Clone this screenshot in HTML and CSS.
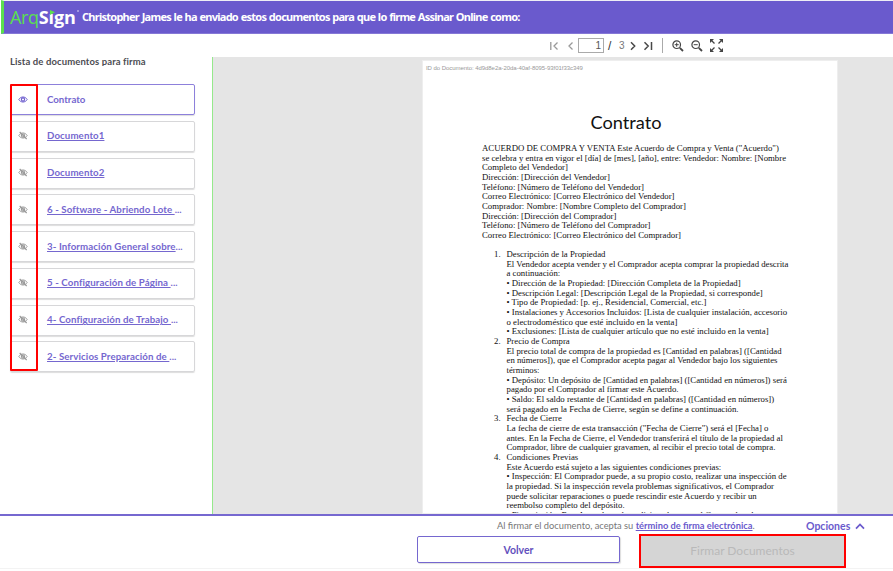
FILE: index.html
```html
<!DOCTYPE html>
<html lang="es">
<head>
<meta charset="utf-8">
<title>ArqSign</title>
<link rel="stylesheet" href="styles.css">
</head>
<body>
<svg width="0" height="0" class="defs">
  <symbol id="eye" viewBox="0 0 12 10"><path d="M1 5C3.2 1 8.8 1 11 5 8.8 9 3.2 9 1 5Z" fill="none" stroke="currentColor" stroke-width="1.2"/><circle cx="6" cy="5" r="1.9" fill="none" stroke="currentColor" stroke-width="1.4"/></symbol>
  <symbol id="off" viewBox="0 0 12 10"><path d="M1 5C3.2 1 8.8 1 11 5 8.8 9 3.2 9 1 5Z" fill="none" stroke="currentColor" stroke-width="1.2"/><circle cx="6" cy="5" r="1.9" fill="none" stroke="currentColor" stroke-width="1.3"/><path d="M2 .8 10.4 9.2" stroke="currentColor" stroke-width="1.3"/></symbol>
</svg>
<header class="top">
  <div class="logo"><span class="arq">Arq</span><b>S<span class="i">ı<svg viewBox="0 0 5 5"><path d="M0 0 5 2.2 0 5Z" fill="#5be04e"/></svg></span>gn</b><i class="reg"></i></div>
  <p class="sender">Christopher James le ha enviado estos documentos para que lo firme Assinar Online como:</p>
</header>
<main class="main">
  <aside class="side">
    <h2><span>Lista de documentos para firma</span></h2>
    <div class="list">
      <div class="doc active"><svg><use href="#eye"/></svg><span>Contrato</span></div>
      <div class="doc"><svg><use href="#off"/></svg><a>Documento1</a></div>
      <div class="doc"><svg><use href="#off"/></svg><a>Documento2</a></div>
      <div class="doc"><svg><use href="#off"/></svg><a class="d3">6 - Software - Abriendo Lote </a><span>...</span></div>
      <div class="doc"><svg><use href="#off"/></svg><a class="d4">3- Información General sobre</a><span>...</span></div>
      <div class="doc"><svg><use href="#off"/></svg><a class="d5">5 - Configuración de Página </a><span>...</span></div>
      <div class="doc"><svg><use href="#off"/></svg><a class="d6">4- Configuración de Trabajo </a><span>...</span></div>
      <div class="doc"><svg><use href="#off"/></svg><a class="d7">2- Servicios Preparación de </a><span>...</span></div>
      <div class="mark"></div>
    </div>
  </aside>
  <section class="viewer">
    <div class="tools">
      <svg class="nav" width="28" height="12" viewBox="0 0 28 12" fill="none" stroke="#999" stroke-width="1.3"><path d="M1.8 2v8M8.5 2.5 5 6l3.500 3.500M23.500 2.500 20 6l3.500 3.500"/></svg>
      <span class="num">1</span><span class="slash">/</span><span class="total">3</span>
      <svg class="next" width="26" height="12" viewBox="0 0 26 12" fill="none" stroke="#484848" stroke-width="1.500"><path d="M2 2.300 5.700 6 2 9.700M15.500 2.300 19.200 6l-3.700 3.700M22.500 2v8"/></svg>
      <i class="sep"></i>
      <svg class="zoom" width="12" height="12" viewBox="0 0 12 12" fill="none" stroke="#444"><circle cx="4.700" cy="4.700" r="3.800" stroke-width="1.200"/><path d="M7.800 7.800 11 11" stroke-width="1.800"/><path d="M2.700 4.700h4M4.700 2.700v4"/></svg>
      <svg class="zoom" width="12" height="12" viewBox="0 0 12 12" fill="none" stroke="#444"><circle cx="4.700" cy="4.700" r="3.800" stroke-width="1.200"/><path d="M7.800 7.800 11 11" stroke-width="1.800"/><path d="M2.700 4.700h4"/></svg>
      <svg width="13" height="13" viewBox="0 0 13 13" fill="#444" stroke="#444"><path stroke="none" d="M0 0h4L0 4ZM13 0v4L9 0ZM0 13V9l4 4ZM13 13H9l4-4Z"/><path stroke-width="1.300" d="m1 1 3.500 3.500M12 1 8.500 4.500M1 12l3.500-3.500M12 12 8.500 8.500"/></svg>
    </div>
    <div class="canvas">
      <article class="page">
        <p class="id">ID do Documento: 4d9d8e2a-20da-40af-8095-93f01f33c349</p>
        <h1>Contrato</h1>
        <div class="text">ACUERDO DE COMPRA Y VENTA Este Acuerdo de Compra y Venta ("Acuerdo")
se celebra y entra en vigor el [día] de [mes], [año], entre: Vendedor: Nombre: [Nombre
Completo del Vendedor]
Dirección: [Dirección del Vendedor]
Teléfono: [Número de Teléfono del Vendedor]
Correo Electrónico: [Correo Electrónico del Vendedor]
Comprador: Nombre: [Nombre Completo del Comprador]
Dirección: [Dirección del Comprador]
Teléfono: [Número de Teléfono del Comprador]
Correo Electrónico: [Correo Electrónico del Comprador]</div>
        <ol class="text">
<li>Descripción de la Propiedad
El Vendedor acepta vender y el Comprador acepta comprar la propiedad descrita
a continuación:
• Dirección de la Propiedad: [Dirección Completa de la Propiedad]
• Descripción Legal: [Descripción Legal de la Propiedad, si corresponde]
• Tipo de Propiedad: [p. ej., Residencial, Comercial, etc.]
• Instalaciones y Accesorios Incluidos: [Lista de cualquier instalación, accesorio
o electrodoméstico que esté incluido en la venta]
• Exclusiones: [Lista de cualquier artículo que no esté incluido en la venta]</li><li>Precio de Compra
El precio total de compra de la propiedad es [Cantidad en palabras] ([Cantidad
en números]), que el Comprador acepta pagar al Vendedor bajo los siguientes
términos:
• Depósito: Un depósito de [Cantidad en palabras] ([Cantidad en números]) será
pagado por el Comprador al firmar este Acuerdo.
• Saldo: El saldo restante de [Cantidad en palabras] ([Cantidad en números])
será pagado en la Fecha de Cierre, según se define a continuación.</li><li>Fecha de Cierre
La fecha de cierre de esta transacción ("Fecha de Cierre") será el [Fecha] o
antes. En la Fecha de Cierre, el Vendedor transferirá el título de la propiedad al
Comprador, libre de cualquier gravamen, al recibir el precio total de compra.</li><li>Condiciones Previas
Este Acuerdo está sujeto a las siguientes condiciones previas:
• Inspección: El Comprador puede, a su propio costo, realizar una inspección de
la propiedad. Si la inspección revela problemas significativos, el Comprador
puede solicitar reparaciones o puede rescindir este Acuerdo y recibir un
reembolso completo del depósito.
• Financiación: Este Acuerdo está condicionado a que el Comprador obtenga</li></ol>
      </article>
    </div>
  </section>
</main>
<footer class="foot">
  <div class="terms"><p>Al firmar el documento, acepta su <a>término de firma electrónica</a>.</p>
    <div class="opts"><span>Opciones</span><svg width="10" height="7" viewBox="0 0 10 7" fill="none" stroke="#6a5acd" stroke-width="1.700"><path d="M1 5.700 5 1.500 9 5.700"/></svg></div></div>
  <div class="actions"><button class="back">Volver</button><button class="sign">Firmar Documentos</button></div>
</footer>
</body>
</html>
```
FILE: styles.css
```css
* { box-sizing: border-box; }
body { margin: 0; width: 893px; height: 571px; overflow: hidden; background: #fff; font-family: Lato, sans-serif; display: flex; flex-direction: column; }
p, h1, h2 { margin: 0; white-space: nowrap; }
svg { flex: none; }
.defs { position: absolute; }
.top { height: 34px; flex: none; margin-left: 1px; background: #6a5acd; border-top: 1px solid #eeeef5; border-left: 3px solid #5be04e; border-bottom: 1px solid #8578d6; display: flex; align-items: center; color: #fff; }
.logo { width: 78px; padding-left: 6px; display: flex; align-items: baseline; font: 18px/30px "Open Sans", sans-serif; letter-spacing: -.35px; white-space: nowrap; }
.logo b { font-weight: 700; letter-spacing: -.1px; }
.arq { color: #5be04e; }
.i { position: relative; }
.i svg { position: absolute; width: 5px; height: 5px; left: 1px; top: 5px; }
.reg { width: 2px; height: 2px; border-radius: 50%; background: #b5ace6; align-self: flex-start; margin: 8px 0 0 1px; }
.sender { font: 700 11px/30px "Noto Sans", sans-serif; letter-spacing: -.74px; word-spacing: .5px; }
.main { height: 480px; flex: none; display: flex; }
.side { width: 212px; padding: 23px 0 0 10px; }
.side h2 { height: 9px; overflow: hidden; font: 700 9.500px/12px Lato, sans-serif; letter-spacing: .11px; color: #4c4c52; display: flex; align-items: flex-end; }
.side h2 span { margin-bottom: -2px; }
.list { position: relative; margin-top: 18px; display: grid; row-gap: 5.750px; width: 185px; }
.doc { height: 31px; border: 1px solid #d7d7d9; border-radius: 2px; box-shadow: 0 1px 1px #ddd; display: flex; align-items: center; font-size: 9.700px; font-weight: 700; color: #7567cf; white-space: pre; padding-bottom: 2px; }
.doc svg { width: 10px; height: 9px; margin: 1px 19px 0 7px; color: #999; }
.doc.active { border-color: #8d80db; }
.doc.active svg { color: #6a5acd; }
.doc a { text-decoration: underline; letter-spacing: .1px; }
.mark { position: absolute; left: 0; top: 0; width: 28px; height: 287px; border: 2px solid #f00; border-radius: 1px; }
.viewer { flex: 1; min-width: 0; }
.tools { height: 23px; display: flex; align-items: center; padding-left: 337px; color: #777; font: 10px/14px "Liberation Sans", sans-serif; }
.num { width: 26px; height: 15px; margin-left: 1px; padding-right: 2px; border: 1px solid #aaa; text-align: right; color: #555; }
.slash { margin-left: 4px; width: 7px; color: #333; font-size: 12px; }
.total { width: 6px; margin-left: 4px; }
.next { margin-left: 4px; }
.sep { width: 1px; height: 15px; background: #aaa; margin: 0 9px 0 7px; }
.zoom { margin-right: 7px; }
.canvas { height: 457px; background: #e5e5e5; border-left: 1.500px solid #95e98b; padding: 3px 0 0 209px; overflow: hidden; }
.page { width: 416px; height: 454px; background: #fff; border: 1px solid #eee; overflow: hidden; }
.id { font: 6px/8px "Liberation Sans", sans-serif; color: #999; padding: 3px 0 0 3px; letter-spacing: -.05px; }
.page h1 { font: 400 18.200px/22px Lato, sans-serif; color: #111; text-align: center; margin-top: 39px; padding-right: 8px; }
.text { font: 8.750px/9.670px "Liberation Serif", serif; white-space: pre; color: #111; margin: 11px 0 0 59px; }
ol.text { margin: 9.300px 0 0 71px; padding: 0; list-style: none; counter-reset: n; white-space: normal; }
ol.text li { counter-increment: n; white-space: pre; display: flex; }
ol.text li::before { content: counter(n) "."; width: 12.500px; flex: none; }
.foot { height: 57px; border-top: 2px solid #7668d0; background: #fff; }
.terms { height: 20px; display: flex; align-items: center; padding-left: 497px; font-size: 9.300px; line-height: 18px; color: #777; }
.terms p { width: 309px; }
.terms a { color: #6a5acd; font-weight: 700; text-decoration: underline; }
.opts { display: flex; align-items: center; gap: 5px; color: #6a5acd; font-size: 10.500px; font-weight: 700; }
.actions { display: flex; align-items: flex-start; padding-left: 417px; height: 33px; border-bottom: 1px solid #f3f3f3; }
button { font: 700 10.500px/14px Lato, sans-serif; padding: 0; }
.back { width: 203px; height: 27px; background: #fff; border: 1.500px solid #7567cf; border-radius: 2px; color: #6351bd; box-shadow: 1px 1px 1px #ddd; }
.sign { width: 207px; height: 34px; margin: -2px 0 0 19px; border: 2px solid #f00; background: #d5d5d5; color: #b9b9b9; font: 400 12px/14px Lato, sans-serif; }
```
